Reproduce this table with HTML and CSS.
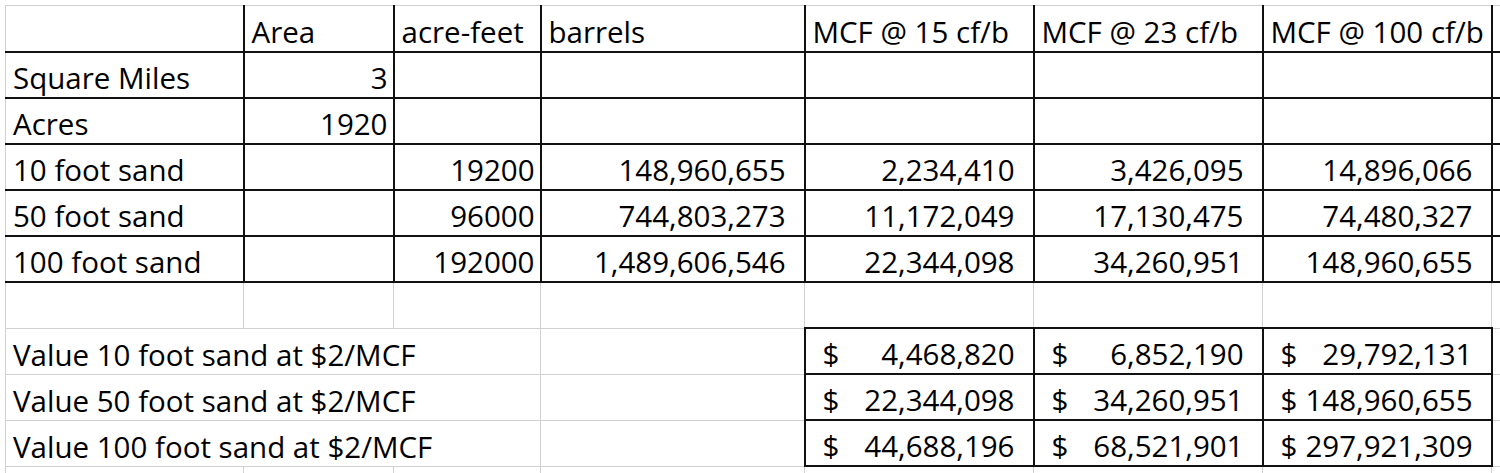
FILE: index.html
```html
<!DOCTYPE html>
<html>
<head>
<meta charset="utf-8">
<link rel="stylesheet" href="styles.css">
</head>
<body>
<table class="sheet">
  <colgroup>
    <col class="c1"><col class="c2"><col class="c3"><col class="c4"><col class="c5"><col class="c6"><col class="c7"><col class="c8">
  </colgroup>
  <tr class="hdr">
    <td class="top first"></td>
    <td class="top dk">Area</td>
    <td class="top dk">acre-feet</td>
    <td class="top dk">barrels</td>
    <td class="top dk">MCF @ 15 cf/b</td>
    <td class="top dk">MCF @ 23 cf/b</td>
    <td class="top dk">MCF @ 100 cf/b</td>
    <td class="top"></td>
  </tr>
  <tr class="upper">
    <td class="first">Square Miles</td>
    <td class="dk num">3</td>
    <td class="dk"></td>
    <td class="dk"></td>
    <td class="dk"></td>
    <td class="dk"></td>
    <td class="dk"></td>
    <td></td>
  </tr>
  <tr class="upper">
    <td class="first">Acres</td>
    <td class="dk num">1920</td>
    <td class="dk"></td>
    <td class="dk"></td>
    <td class="dk"></td>
    <td class="dk"></td>
    <td class="dk"></td>
    <td></td>
  </tr>
  <tr class="upper">
    <td class="first">10 foot sand</td>
    <td class="dk"></td>
    <td class="dk num">19200</td>
    <td class="dk acc">148,960,655</td>
    <td class="dk acc">2,234,410</td>
    <td class="dk acc">3,426,095</td>
    <td class="dk acc">14,896,066</td>
    <td></td>
  </tr>
  <tr class="upper">
    <td class="first">50 foot sand</td>
    <td class="dk"></td>
    <td class="dk num">96000</td>
    <td class="dk acc">744,803,273</td>
    <td class="dk acc">11,172,049</td>
    <td class="dk acc">17,130,475</td>
    <td class="dk acc">74,480,327</td>
    <td></td>
  </tr>
  <tr class="upper">
    <td class="first">100 foot sand</td>
    <td class="dk"></td>
    <td class="dk num">192000</td>
    <td class="dk acc">1,489,606,546</td>
    <td class="dk acc">22,344,098</td>
    <td class="dk acc">34,260,951</td>
    <td class="dk acc">148,960,655</td>
    <td></td>
  </tr>
  <tr>
    <td></td><td></td><td></td><td></td><td></td><td></td><td></td><td></td>
  </tr>
  <tr>
    <td colspan="3">Value 10 foot sand at $2/MCF</td>
    <td></td>
    <td class="box"><div class="money"><span>$</span><span>4,468,820</span></div></td>
    <td class="box"><div class="money"><span>$</span><span>6,852,190</span></div></td>
    <td class="box"><div class="money"><span>$</span><span>29,792,131</span></div></td>
    <td></td>
  </tr>
  <tr>
    <td colspan="3">Value 50 foot sand at $2/MCF</td>
    <td></td>
    <td class="box"><div class="money"><span>$</span><span>22,344,098</span></div></td>
    <td class="box"><div class="money"><span>$</span><span>34,260,951</span></div></td>
    <td class="box"><div class="money"><span>$</span><span>148,960,655</span></div></td>
    <td></td>
  </tr>
  <tr>
    <td colspan="3">Value 100 foot sand at $2/MCF</td>
    <td></td>
    <td class="box"><div class="money"><span>$</span><span>44,688,196</span></div></td>
    <td class="box"><div class="money"><span>$</span><span>68,521,901</span></div></td>
    <td class="box"><div class="money"><span>$</span><span>297,921,309</span></div></td>
    <td></td>
  </tr>
  <tr>
    <td></td><td></td><td></td><td></td><td></td><td></td><td></td><td></td>
  </tr>
</table>
</body>
</html>
```

FILE: styles.css
```css
html, body {
  margin: 0;
  padding: 0;
  background: #ffffff;
  overflow: hidden;
}

.sheet {
  border-collapse: collapse;
  table-layout: fixed;
  width: 1546px;
  margin: 5px 0 0 5px;
  font-family: "Open Sans", "Liberation Sans", sans-serif;
  font-size: 29.5px;
  color: #000000;
  white-space: nowrap;
}

.c1 { width: 238px; }
.c2 { width: 150px; }
.c3 { width: 147px; }
.c4 { width: 264px; }
.c5 { width: 229px; }
.c6 { width: 229px; }
.c7 { width: 229px; }
.c8 { width: 60px; }

.sheet td {
  border: 1px solid #d0d0d0;
  height: 43px;
  padding: 0 7px 1px 7px;
  line-height: 36px;
  vertical-align: bottom;
  text-align: left;
  overflow: hidden;
}

.sheet tr.hdr td {
  height: 44px;
}

.sheet tr.hdr td,
.sheet tr.upper td {
  border-bottom: 2px solid #111111;
}

.sheet td.dk {
  border-left: 2px solid #111111;
  border-right: 2px solid #111111;
}

.sheet td.num {
  text-align: right;
  padding-right: 5px;
}

.sheet td.acc {
  text-align: right;
  padding-right: 18px;
}

.sheet td.box {
  border: 2px solid #111111;
  padding-left: 17px;
  padding-right: 18px;
}

.money {
  display: flex;
  justify-content: space-between;
}
```
